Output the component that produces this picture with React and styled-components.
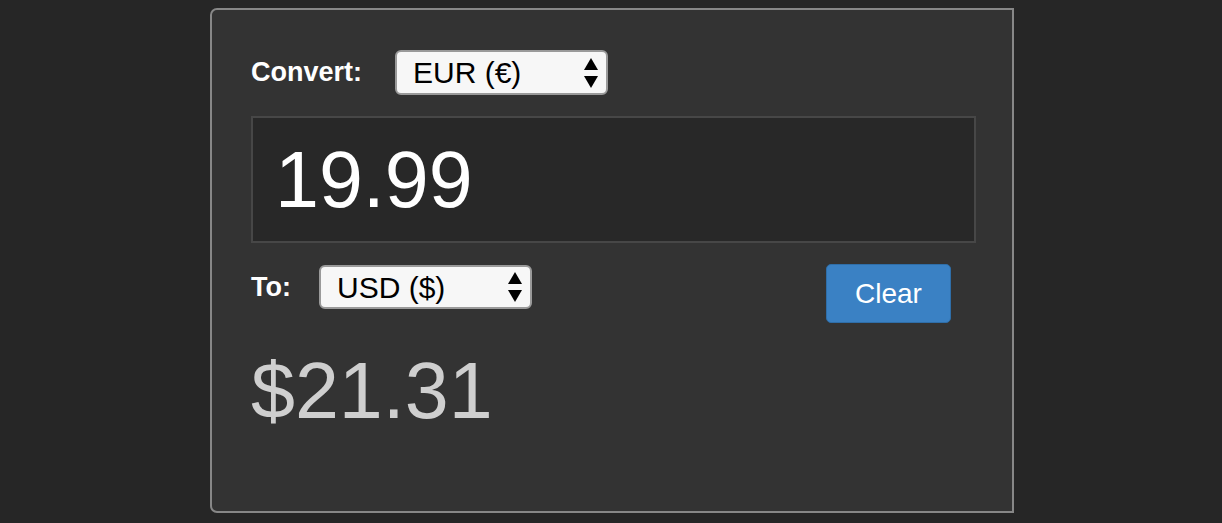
import React, { useState } from "react";
import styled, { createGlobalStyle } from "styled-components";

const Global = createGlobalStyle`
  html, body { margin: 0; padding: 0; background: #262626; }
  body { font-family: "Liberation Sans", Arial, Helvetica, sans-serif; }
`;

const Page = styled.div`
  width: 1222px;
  height: 523px;
  padding: 8px 0 0 210px;
  box-sizing: border-box;
`;

const Panel = styled.div`
  width: 804px;
  height: 505px;
  box-sizing: border-box;
  background: #333333;
  border: 2px solid #878787;
  border-radius: 7px 0 0 7px;
  padding: 40px 36px 0 39px;
  display: flex;
  flex-direction: column;
`;

const Row = styled.div`
  display: flex;
  align-items: ${(p) => p.$align || "center"};
  margin-top: ${(p) => p.$mt || 0}px;
`;

const Label = styled.label`
  color: #ffffff;
  font-weight: bold;
  font-size: 27px;
  width: ${(p) => p.$w}px;
  flex: none;
  line-height: ${(p) => p.$lh || 45}px;
`;

const SelectWrap = styled.div`
  position: relative;
  width: 213px;
  height: ${(p) => p.$h}px;
  margin-top: ${(p) => p.$mt || 0}px;
  flex: none;
`;

const Select = styled.select`
  appearance: none;
  -webkit-appearance: none;
  width: 100%;
  height: 100%;
  box-sizing: border-box;
  background: #f7f7f7;
  border: 2px solid #9a9a9a;
  border-radius: 6px;
  padding: 0 0 0 16px;
  font-family: "Liberation Sans", Arial, sans-serif;
  font-size: 30px;
  color: #000;
  outline: none;
`;

const Arrows = styled.svg`
  position: absolute;
  right: 10px;
  top: 50%;
  transform: translateY(-50%);
  pointer-events: none;
`;

const Amount = styled.input`
  margin-top: 21px;
  width: 725px;
  height: 127px;
  box-sizing: border-box;
  background: #282828;
  border: 2px solid #474747;
  padding: 0 0 0 22px;
  color: #ffffff;
  font-family: "Liberation Sans", Arial, sans-serif;
  font-size: 79px;
  outline: none;
`;

const Spacer = styled.div`
  flex: 1;
`;

const ClearButton = styled.button`
  width: 125px;
  height: 59px;
  margin-right: 25px;
  box-sizing: border-box;
  background: #3a81c4;
  border: 1px solid #2f6ea8;
  border-radius: 5px;
  color: #ffffff;
  font-family: "Liberation Sans", Arial, sans-serif;
  font-size: 28px;
  cursor: pointer;
`;

const Result = styled.div`
  margin-top: 22px;
  color: #cfcfcf;
  font-size: 79px;
  line-height: 92px;
`;

function ArrowIcon() {
  return (
    <Arrows width="14" height="30" viewBox="0 0 14 30">
      <polygon points="7,0 14,12 0,12" fill="#000" />
      <polygon points="0,18 14,18 7,30" fill="#000" />
    </Arrows>
  );
}

export default function App() {
  const [from, setFrom] = useState("EUR");
  const [to, setTo] = useState("USD");
  const [amount, setAmount] = useState("19.99");

  return (
    <>
      <Global />
      <Page>
        <Panel>
          <Row>
            <Label $w={144}>Convert:</Label>
            <SelectWrap $h={45}>
              <Select value={from} onChange={(e) => setFrom(e.target.value)}>
                <option value="EUR">EUR (€)</option>
                <option value="USD">USD ($)</option>
              </Select>
              <ArrowIcon />
            </SelectWrap>
          </Row>
          <Amount value={amount} onChange={(e) => setAmount(e.target.value)} />
          <Row $align="flex-start" $mt={21}>
            <Label $w={68} $lh={46}>To:</Label>
            <SelectWrap $h={44} $mt={1}>
              <Select value={to} onChange={(e) => setTo(e.target.value)}>
                <option value="USD">USD ($)</option>
                <option value="EUR">EUR (€)</option>
              </Select>
              <ArrowIcon />
            </SelectWrap>
            <Spacer />
            <ClearButton onClick={() => setAmount("")}>Clear</ClearButton>
          </Row>
          <Result>$21.31</Result>
        </Panel>
      </Page>
    </>
  );
}
